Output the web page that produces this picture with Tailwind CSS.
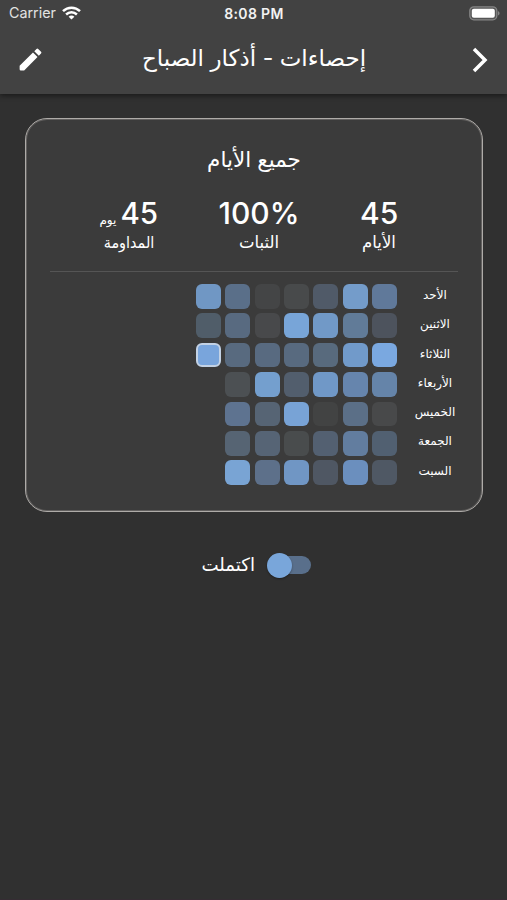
<!DOCTYPE html>
<html lang="ar">
<head>
<meta charset="utf-8">
<title>إحصاءات</title>
<script src="https://cdn.jsdelivr.net/npm/@tailwindcss/browser@4"></script>
</head>
<body class="bg-[#303030]">
<div class="w-[507px] h-[900px] overflow-hidden bg-[#303030] border-b border-[#352c33] text-white font-['Inter','DejaVu_Sans',sans-serif] flex flex-col">
  <header class="h-[94px] shrink-0 bg-[#424242] shadow-[0_2px_5px_rgba(0,0,0,0.45)]">
    <div class="h-[27px] grid grid-cols-3 items-center pl-[9px] pr-[8px]">
      <div class="flex items-center gap-[6px] text-[14.3px] leading-none text-[#e2e2e2]">
        <span>Carrier</span>
        <svg class="w-[19px] h-[14px]" viewBox="0 0 19 14" fill="none" stroke="#fff" stroke-width="2.5"><path d="M1 5.2C5.8.6 13.2.6 18 5.2M4.1 8.5c3.1-2.9 7.7-2.9 10.8 0"/><path d="M9.5 13.6 6.6 10.7c1.6-1.5 4.2-1.5 5.8 0z" fill="#fff" stroke="none"/></svg>
      </div>
      <div class="text-center text-[14px] tracking-[0.35px] leading-none font-semibold text-[#f2f2f2] whitespace-nowrap">8:08 PM</div>
      <svg class="justify-self-end -mr-[1px] w-[31px] h-[15px]" viewBox="0 0 31 15"><rect x=".8" y=".8" width="27" height="13" rx="4" fill="#555" stroke="#858585" stroke-width="1.3"/><rect x="2.8" y="2.8" width="23" height="9" rx="2" fill="#fff"/><path d="M29 5.2c2.1.6 2.1 3.6 0 4.2z" fill="#858585"/></svg>
    </div>
    <div class="h-[65px] flex items-center justify-between pl-[16px] pr-[14px]">
      <svg class="w-[29px] h-[29px]" viewBox="0 0 24 24" fill="#fff"><path d="M3 17.25V20a1 1 0 0 0 1 1h2.75L17.81 9.94l-3.75-3.75zM20.71 7.04a1 1 0 0 0 0-1.41l-2.34-2.34a1 1 0 0 0-1.41 0l-1.83 1.83 3.75 3.75z"/></svg>
      <h1 dir="rtl" class="w-[229px] mr-[4px] pb-[3px] text-center whitespace-nowrap text-[23px] leading-[30px]">إحصاءات - أذكار الصباح</h1>
      <svg class="w-[26px] h-[28px]" viewBox="0 0 26 28" fill="none" stroke="#fff" stroke-width="3.5"><path d="m7 3 11 11L7 25"/></svg>
    </div>
  </header>

  <main class="pt-[24px] flex flex-col items-center">
    <section class="ml-[1px] w-[458px] h-[394px] rounded-[22px] border border-[#aeaba8] shadow-[inset_0_0_0_1px_#62605f] bg-[#3b3b3b] px-[24px] flex flex-col">
      <h2 dir="rtl" class="mt-[26px] text-center text-[21.5px] leading-[28px] whitespace-nowrap">جميع الأيام</h2>
      <div class="mt-[23px] flex justify-between pl-[50px] pr-[60px] text-center whitespace-nowrap">
        <div class="w-[58px]">
          <div class="flex items-baseline justify-end gap-[4px] h-[34px] text-[29.5px] leading-[34px] font-medium"><span dir="rtl" class="text-[12px] font-normal">يوم</span><span>45</span></div>
          <div dir="rtl" class="text-[16px] leading-[24px] scale-x-90">المداومة</div>
        </div>
        <div class="w-[82px]">
          <div class="h-[34px] text-[30px] leading-[34px] font-medium">100%</div>
          <div dir="rtl" class="text-[16.5px] leading-[24px]">الثبات</div>
        </div>
        <div class="w-[38px]">
          <div class="h-[34px] text-[30px] leading-[34px] font-medium">45</div>
          <div dir="rtl" class="text-[16.5px] leading-[24px]">الأيام</div>
        </div>
      </div>
      <div class="mt-[17px] h-px bg-[#555]"></div>
      <div class="mt-[12px] ml-[146px] flex gap-[10px]">
        <div id="cells" class="grid grid-cols-7 w-[201px] shrink-0 gap-[4.6px]"></div>
        <div dir="rtl" class="w-[56px] shrink-0 grid grid-rows-7 text-center whitespace-nowrap text-[12px] leading-[29.3px] -mt-[4px] font-medium">
          <span>الأحد</span><span>الاثنين</span><span>الثلاثاء</span><span>الأربعاء</span><span>الخميس</span><span>الجمعة</span><span>السبت</span>
        </div>
      </div>
    </section>
    <div class="mt-[37px] ml-[6px] flex items-center gap-[12px]">
      <span dir="rtl" class="w-[53px] text-center whitespace-nowrap text-[18.2px] leading-[30px] pb-[2px]">اكتملت</span>
      <div class="w-[44px] h-[25px] flex items-center relative">
        <div class="ml-[4px] w-[40px] h-[18px] rounded-full bg-[#596f8b]"></div>
        <div class="absolute left-0 top-0 size-[25px] rounded-full bg-[#79a6da] shadow-[0_1px_2px_rgba(0,0,0,0.35)]"></div>
      </div>
    </div>
  </main>
</div>
<script>
const rows = [
  ['#7097c4','#5a6f89','#444546','#484a4b','#505a68','#749cca','#60799a'],
  ['#505d69','#586a80','#48494b','#78a5d8','#7199c7','#617b98','#4d535d'],
  ['#79a5dc','#586a7f','#586a80','#586a7f','#586a7d','#719aca','#7aa8e0'],
  ['','#4c5053','#749fce','#525e6d','#7098c7','#6685ad','#6584a9'],
  ['','#5e7390','#566474','#78a3d6','#424343','#5b6f87','#48494a'],
  ['','#566473','#566475','#494c4d','#536071','#627d9f','#516071'],
  ['','#79a4d4','#5d708a','#7096c4','#4f5763','#6b8fbe','#4f5864']
];
const grid = document.getElementById('cells');
rows.forEach((row, r) => row.forEach((color, c) => {
  const cell = document.createElement('div');
  cell.className = 'h-[24.7px] rounded-[6px]';
  if (color) cell.style.backgroundColor = color;
  if (r === 2 && c === 0) cell.className += ' border-2 border-[#c3d2e5]';
  grid.appendChild(cell);
}));
</script>
</body>
</html>
